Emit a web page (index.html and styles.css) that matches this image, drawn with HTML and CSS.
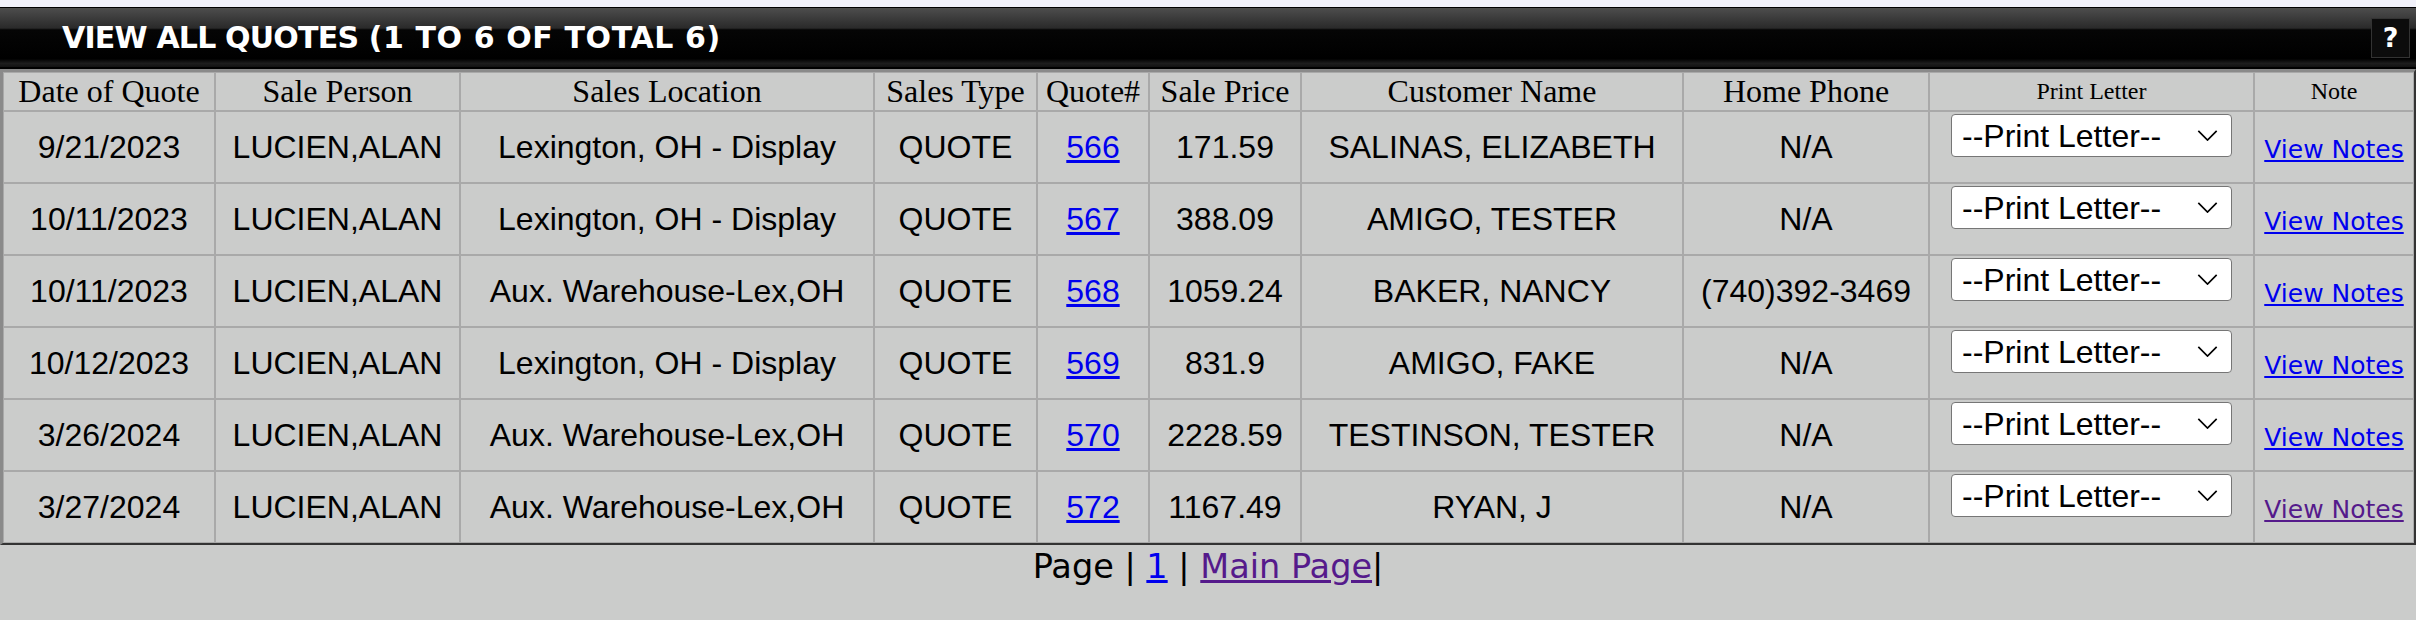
FILE: index.html
```html
<!DOCTYPE html>
<html lang="en">
<head>
<meta charset="utf-8">
<title>View All Quotes</title>
<link rel="stylesheet" href="styles.css">
</head>
<body>
<div class="page">
  <div class="titlebar">
    <h1 class="title"><span class="title-main">VIEW ALL QUOTES</span> <span class="title-count">(1 TO 6 OF TOTAL 6)</span></h1>
    <a class="help" href="#">?</a>
  </div>
  <table class="quotes">
    <colgroup>
      <col class="c-date"><col class="c-person"><col class="c-loc"><col class="c-type"><col class="c-num">
      <col class="c-price"><col class="c-name"><col class="c-phone"><col class="c-print"><col class="c-note">
    </colgroup>
    <thead>
      <tr class="head">
        <th>Date of Quote</th><th>Sale Person</th><th>Sales Location</th><th>Sales Type</th><th>Quote#</th>
        <th>Sale Price</th><th>Customer Name</th><th>Home Phone</th><th class="small">Print Letter</th><th class="small">Note</th>
      </tr>
    </thead>
    <tbody>
      <tr>
        <td>9/21/2023</td><td>LUCIEN,ALAN</td><td>Lexington, OH - Display</td><td>QUOTE</td><td><a href="#">566</a></td>
        <td>171.59</td><td>SALINAS, ELIZABETH</td><td>N/A</td>
        <td class="print"><span class="sel"><select><option>--Print Letter--</option></select><svg class="chev" viewBox="0 0 22 12"><path d="M1 1 L11 11 L21 1"/></svg></span></td>
        <td><a class="notes" href="#">View Notes</a></td>
      </tr>
      <tr>
        <td>10/11/2023</td><td>LUCIEN,ALAN</td><td>Lexington, OH - Display</td><td>QUOTE</td><td><a href="#">567</a></td>
        <td>388.09</td><td>AMIGO, TESTER</td><td>N/A</td>
        <td class="print"><span class="sel"><select><option>--Print Letter--</option></select><svg class="chev" viewBox="0 0 22 12"><path d="M1 1 L11 11 L21 1"/></svg></span></td>
        <td><a class="notes" href="#">View Notes</a></td>
      </tr>
      <tr>
        <td>10/11/2023</td><td>LUCIEN,ALAN</td><td>Aux. Warehouse-Lex,OH</td><td>QUOTE</td><td><a href="#">568</a></td>
        <td>1059.24</td><td>BAKER, NANCY</td><td>(740)392-3469</td>
        <td class="print"><span class="sel"><select><option>--Print Letter--</option></select><svg class="chev" viewBox="0 0 22 12"><path d="M1 1 L11 11 L21 1"/></svg></span></td>
        <td><a class="notes" href="#">View Notes</a></td>
      </tr>
      <tr>
        <td>10/12/2023</td><td>LUCIEN,ALAN</td><td>Lexington, OH - Display</td><td>QUOTE</td><td><a href="#">569</a></td>
        <td>831.9</td><td>AMIGO, FAKE</td><td>N/A</td>
        <td class="print"><span class="sel"><select><option>--Print Letter--</option></select><svg class="chev" viewBox="0 0 22 12"><path d="M1 1 L11 11 L21 1"/></svg></span></td>
        <td><a class="notes" href="#">View Notes</a></td>
      </tr>
      <tr>
        <td>3/26/2024</td><td>LUCIEN,ALAN</td><td>Aux. Warehouse-Lex,OH</td><td>QUOTE</td><td><a href="#">570</a></td>
        <td>2228.59</td><td>TESTINSON, TESTER</td><td>N/A</td>
        <td class="print"><span class="sel"><select><option>--Print Letter--</option></select><svg class="chev" viewBox="0 0 22 12"><path d="M1 1 L11 11 L21 1"/></svg></span></td>
        <td><a class="notes" href="#">View Notes</a></td>
      </tr>
      <tr>
        <td>3/27/2024</td><td>LUCIEN,ALAN</td><td>Aux. Warehouse-Lex,OH</td><td>QUOTE</td><td><a href="#">572</a></td>
        <td>1167.49</td><td>RYAN, J</td><td>N/A</td>
        <td class="print"><span class="sel"><select><option>--Print Letter--</option></select><svg class="chev" viewBox="0 0 22 12"><path d="M1 1 L11 11 L21 1"/></svg></span></td>
        <td><a class="notes visited" href="#">View Notes</a></td>
      </tr>
    </tbody>
  </table>
  <div class="pager">Page | <a href="#">1</a> | <a class="visited" href="#">Main Page</a>|</div>
</div>
</body>
</html>
```

FILE: styles.css
```css
html, body {
  margin: 0;
  padding: 0;
}

body {
  background: #f1f1fa;
  font-family: "Liberation Sans", Arial, sans-serif;
}

.page {
  margin-top: 7px;
  background: #cbcccb;
  min-height: 613px;
}

.titlebar {
  display: flex;
  align-items: center;
  justify-content: space-between;
  height: 59px;
  border-top: 1px solid #000;
  border-bottom: 2px solid #000;
  padding: 0 6px 0 62px;
  background: linear-gradient(to bottom, #4d4d4d 0%, #2a2a2a 34%, #050505 37%, #000 86%, #1d1d1d 94%, #121212 100%);
}

.title {
  margin: 0;
  color: #fff;
  font: bold 30px "DejaVu Sans", Verdana, sans-serif;
}

.title-main {
  letter-spacing: -0.8px;
}

.title-count {
  letter-spacing: 0.6px;
}

.help {
  box-sizing: border-box;
  width: 39px;
  height: 40px;
  display: flex;
  align-items: center;
  justify-content: center;
  border: 1px solid #333;
  background: #0c0c0c;
  color: #fff;
  text-decoration: none;
  font: bold 27px "DejaVu Sans", Verdana, sans-serif;
}

.quotes {
  width: 2416px;
  table-layout: fixed;
  border-collapse: separate;
  border-spacing: 0;
  border-style: solid;
  border-width: 3px 2px 2px 3px;
  border-color: #8a8a8a #333 #333 #8a8a8a;
}

.c-date { width: 212px; }
.c-person { width: 245px; }
.c-loc { width: 414px; }
.c-type { width: 163px; }
.c-num { width: 112px; }
.c-price { width: 152px; }
.c-name { width: 382px; }
.c-phone { width: 246px; }
.c-print { width: 325px; }
.c-note { width: 160px; }

.quotes th,
.quotes td {
  border: 1px solid #a9a9a9;
  padding: 0 1px;
  text-align: center;
  vertical-align: middle;
  white-space: nowrap;
  overflow: hidden;
}

.quotes th {
  font: normal 32px "Liberation Serif", "Times New Roman", serif;
  color: #000;
}

.quotes th.small {
  font-size: 24px;
}

.quotes tr.head {
  height: 39px;
}

.quotes tbody tr {
  height: 72px;
}

.quotes td {
  font-size: 32px;
  color: #000;
}

.quotes td a {
  color: #0000ee;
}

.quotes td.print {
  vertical-align: top;
  padding-top: 2px;
}

.sel {
  position: relative;
  display: inline-block;
  vertical-align: top;
}

.sel select {
  -webkit-appearance: none;
  appearance: none;
  box-sizing: border-box;
  width: 281px;
  height: 43px;
  margin: 0;
  padding: 0 0 0 10px;
  border: 1px solid #767676;
  border-radius: 4px;
  background: #fff;
  color: #000;
  font: 32px "Liberation Sans", Arial, sans-serif;
}

.chev {
  position: absolute;
  left: 246px;
  top: 16px;
  width: 21px;
  height: 11px;
  pointer-events: none;
  fill: none;
  stroke: #000;
  stroke-width: 1.8;
}

.quotes td a.notes {
  font: 25px "DejaVu Sans", Verdana, sans-serif;
  color: #0000ee;
}

.quotes td a.notes.visited {
  color: #551a8b;
}

.pager {
  text-align: center;
  padding-top: 2px;
  font: 33.5px "DejaVu Sans", Verdana, sans-serif;
  color: #000;
}

.pager a {
  color: #0000ee;
}

.pager a.visited {
  color: #551a8b;
}
```
